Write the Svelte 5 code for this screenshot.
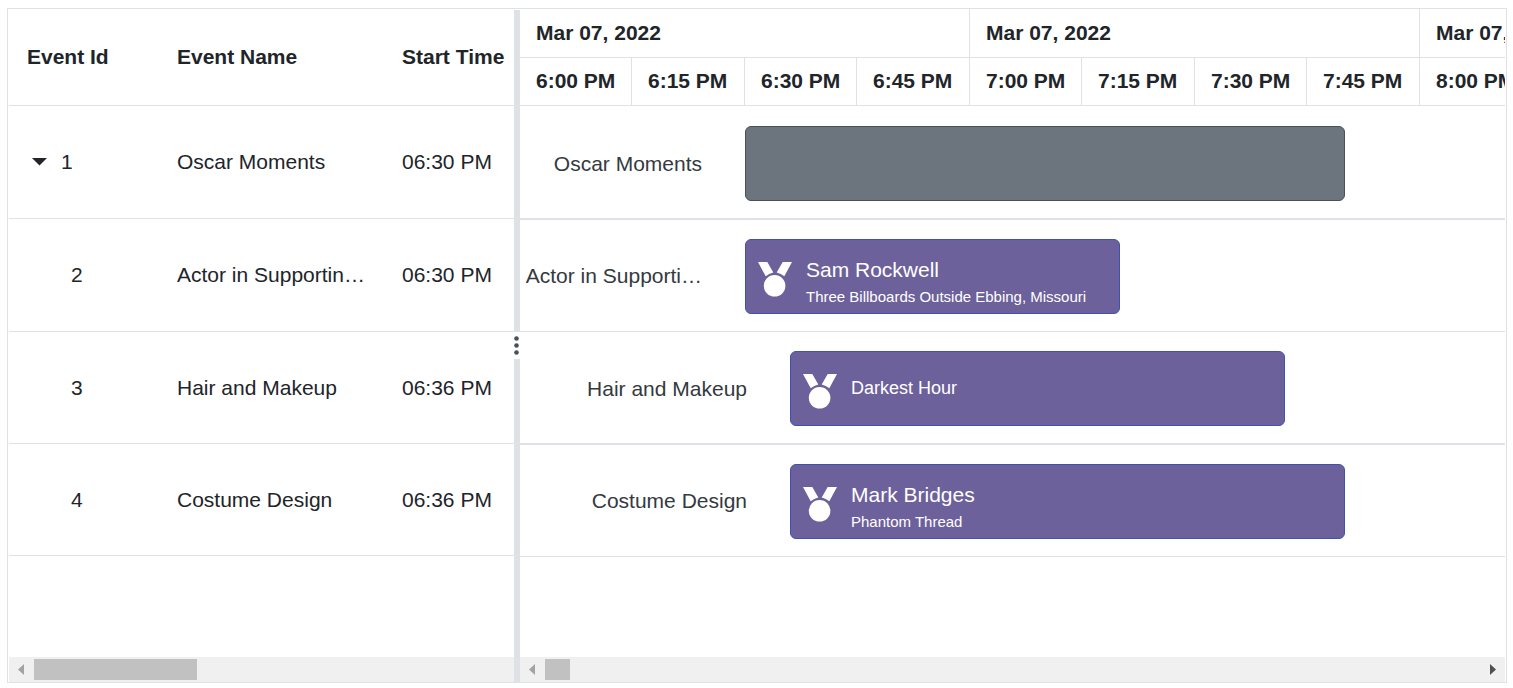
<script>
  const hours = ['Mar 07, 2022', 'Mar 07, 2022', 'Mar 07, 2022'];
  const slots = [
    '6:00 PM', '6:15 PM', '6:30 PM', '6:45 PM',
    '7:00 PM', '7:15 PM', '7:30 PM', '7:45 PM',
    '8:00 PM'
  ];

  const events = [
    { id: 1, name: 'Oscar Moments', label: 'Oscar Moments', time: '06:30 PM', start: 225, width: 600, parent: true },
    {
      id: 2, name: 'Actor in Supportin…', label: 'Actor in Supporti…', time: '06:30 PM', start: 225, width: 375,
      winner: 'Sam Rockwell', movie: 'Three Billboards Outside Ebbing, Missouri'
    },
    { id: 3, name: 'Hair and Makeup', label: 'Hair and Makeup', time: '06:36 PM', start: 270, width: 495, movie: 'Darkest Hour' },
    {
      id: 4, name: 'Costume Design', label: 'Costume Design', time: '06:36 PM', start: 270, width: 555,
      winner: 'Mark Bridges', movie: 'Phantom Thread'
    }
  ];

  let expanded = $state(true);
  const rows = $derived(expanded ? events : events.slice(0, 1));
</script>

<main class="gantt">
  <section class="grid">
    <table>
      <colgroup><col class="c-id" /><col class="c-name" /><col /></colgroup>
      <thead>
        <tr><th>Event Id</th><th>Event Name</th><th>Start Time</th></tr>
      </thead>
      <tbody>
        {#each rows as e}
          <tr>
            <td>
              <div class="tree" class:child={!e.parent}>
                {#if e.parent}
                  <button class="toggle" aria-label="Toggle row" onclick={() => (expanded = !expanded)}>
                    <svg width="15" height="8" viewBox="0 0 15 8"><path d="M0 0h15L7.500 7.500z" fill="#212529" /></svg>
                  </button>
                {/if}
                <span>{e.id}</span>
              </div>
            </td>
            <td>{e.name}</td>
            <td>{e.time}</td>
          </tr>
        {/each}
      </tbody>
    </table>
    <div class="scroll">
      <button class="arrow" aria-label="Scroll left" disabled>
        <svg width="6" height="11" viewBox="0 0 6 11"><path d="M6 0v11L0 5.500z" fill="#a3a3a3" /></svg>
      </button>
      <div class="thumb wide"></div>
    </div>
  </section>

  <div class="splitter" role="separator" aria-orientation="vertical">
    <div class="handle">
      <svg width="6" height="20" viewBox="0 0 6 20" fill="#495057">
        <circle cx="2.500" cy="3.500" r="2.300" /><circle cx="2.500" cy="10.500" r="2.300" /><circle cx="2.500" cy="17.500" r="2.300" />
      </svg>
    </div>
  </div>

  <section class="chart">
    <table class="timeline">
      <colgroup>
        {#each slots as _}<col />{/each}<col /><col /><col />
      </colgroup>
      <thead>
        <tr>{#each hours as h}<th colspan="4">{h}</th>{/each}</tr>
        <tr>{#each slots as s}<th>{s}</th>{/each}</tr>
      </thead>
    </table>
    <div class="rows">
      {#each rows as e}
        <div class="row">
          <div class="label" style="width: {e.start}px">{e.label}</div>
          <div class="bar" class:parent={e.parent} style="width: {e.width}px">
            {#if !e.parent}
              <svg class="medal" width="34" height="35" viewBox="0 0 34 35" fill="#fff">
                <path d="M0 0h9.300L15.300 10.400Q11 11.500 7.700 14.300z" />
                <path d="M34 0h-9.300L18.700 10.400Q23 11.500 26.300 14.300z" />
                <circle cx="16.600" cy="23.800" r="10.800" />
              </svg>
              <div class="text">
                {#if e.winner}<div class="winner">{e.winner}</div>{/if}
                <div class="movie" class:solo={!e.winner}>{e.movie}</div>
              </div>
            {/if}
          </div>
        </div>
      {/each}
    </div>
    <div class="scroll">
      <button class="arrow" aria-label="Scroll left" disabled>
        <svg width="6" height="11" viewBox="0 0 6 11"><path d="M6 0v11L0 5.500z" fill="#a3a3a3" /></svg>
      </button>
      <div class="thumb"></div>
      <button class="arrow end" aria-label="Scroll right">
        <svg width="6" height="11" viewBox="0 0 6 11"><path d="M0 0v11L6 5.500z" fill="#505050" /></svg>
      </button>
    </div>
  </section>
</main>

<style>
  :global(body) {
    background: #fff;
  }
  .gantt {
    display: flex;
    box-sizing: border-box;
    min-height: calc(100vh - 13px);
    margin: 8px 6px 5px 7px;
    border: 1px solid #dee2e6;
    padding: 0 1px;
    font: 21px/24px 'Liberation Sans', Arial, sans-serif;
    color: #212529;
  }
  section {
    display: flex;
    flex-direction: column;
    min-width: 0;
    overflow: hidden;
  }
  .grid {
    flex: 0 0 505px;
  }
  .chart {
    flex: 1;
  }
  table {
    width: 100%;
    table-layout: fixed;
    border-collapse: separate;
    border-spacing: 0;
  }
  .c-id {
    width: 150px;
  }
  .c-name {
    width: 225px;
  }
  th,
  td {
    box-sizing: border-box;
    padding: 0 0 0 18px;
    border-bottom: 1px solid #dee2e6;
    text-align: left;
    white-space: nowrap;
  }
  .grid th {
    height: 97px;
  }
  .grid td {
    height: 112px;
  }
  .grid tbody tr:nth-child(-n + 2) td {
    height: 113px;
  }
  .tree {
    display: flex;
    align-items: center;
    gap: 14px;
    padding-left: 5px;
  }
  .tree.child {
    padding-left: 44px;
  }
  button {
    display: flex;
    align-items: center;
    padding: 0;
    border: 0;
    background: none;
  }
  .splitter {
    display: flex;
    flex: 0 0 6px;
    flex-direction: column;
    justify-content: center;
    box-sizing: border-box;
    margin-top: 1px;
    padding-bottom: 2px;
    background: #dee2e6;
  }
  .handle {
    display: flex;
    align-items: center;
    height: 27px;
    background: #fff;
  }
  .timeline {
    width: 1350px;
  }
  .timeline col {
    width: 113px;
  }
  .timeline col:nth-child(odd) {
    width: 112px;
  }
  .timeline th {
    height: 48px;
    padding: 0 0 2px 16px;
    border-right: 1px solid #dee2e6;
  }
  .timeline tr:first-child th {
    height: 49px;
    padding-bottom: 0;
  }
  .row {
    display: flex;
    align-items: flex-start;
    box-sizing: border-box;
    height: 112px;
    padding-top: 19px;
    border-bottom: 1px solid #dee2e6;
  }
  .row:nth-child(odd) {
    height: 113px;
    border-bottom-width: 2px;
  }
  .row:first-child {
    height: 114px;
    padding-top: 20px;
  }
  .label {
    flex: none;
    box-sizing: border-box;
    padding-right: 43px;
    line-height: 75px;
    text-align: right;
    white-space: nowrap;
    color: #343a40;
  }
  .row:nth-child(even) .label {
    line-height: 73px;
  }
  .bar {
    display: flex;
    flex: none;
    box-sizing: border-box;
    height: 75px;
    padding-left: 12px;
    border: 1px solid #3f51b5;
    border-radius: 6px;
    background: #6d619b;
    color: #fff;
  }
  .bar.parent {
    border-color: #495057;
    background: #6c757d;
  }
  .medal {
    flex: none;
    margin-top: 22px;
  }
  .text {
    display: flex;
    flex-direction: column;
    gap: 6px;
    padding: 18px 0 0 14px;
    white-space: nowrap;
  }
  .movie {
    font-size: 15px;
    line-height: 17px;
  }
  .movie.solo {
    padding-top: 8px;
    font-size: 18px;
    line-height: 20px;
  }
  .scroll {
    display: flex;
    align-items: center;
    height: 25px;
    margin-top: auto;
    background: #f0f0f0;
  }
  .arrow {
    box-sizing: border-box;
    justify-content: center;
    width: 25px;
    height: 25px;
    padding-right: 1px;
  }
  .arrow.end {
    margin-left: auto;
    padding-right: 0;
  }
  .thumb {
    width: 25px;
    height: 21px;
    background: #c1c1c1;
  }
  .thumb.wide {
    width: 163px;
  }
</style>
